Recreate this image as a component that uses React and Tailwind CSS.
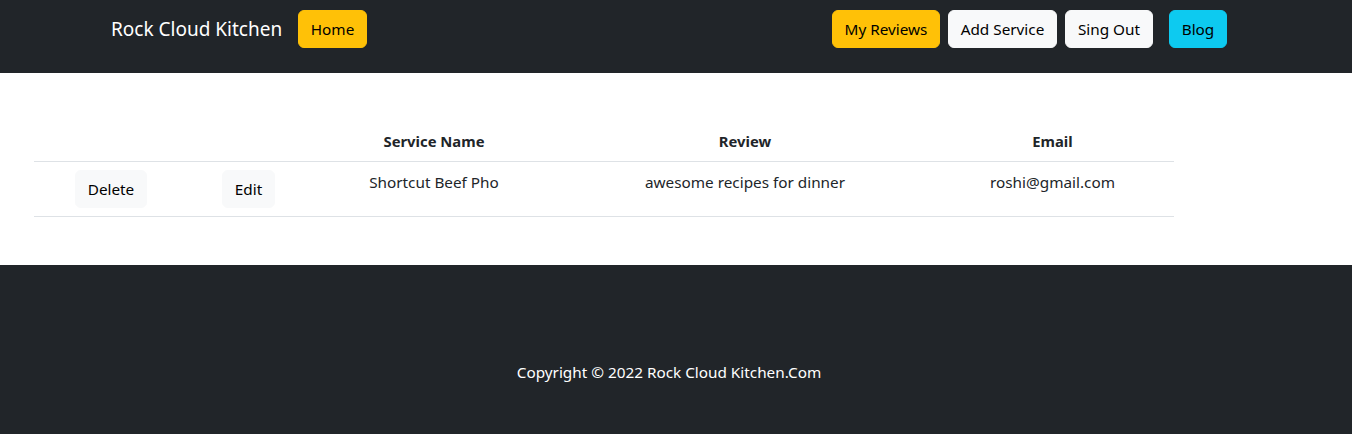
export default function App() {
  const btn = "h-[38px] rounded-[6px] border text-black flex items-center justify-center";
  return (
    <div className="font-['Segoe_UI','Noto_Sans',sans-serif] text-[15.3px] leading-[24px] text-[#212529] bg-white">
      <nav className="bg-[#212529] h-[73px] flex items-start justify-between pt-[10px] pl-[111px] pr-[125px]">
        <div className="flex items-center">
          <span className="text-white text-[19px] leading-[38px] w-[187px]">Rock Cloud Kitchen</span>
          <button className={`${btn} w-[69px] bg-[#ffc107] border-[#ffc107]`}>Home</button>
        </div>
        <div className="flex items-center">
          <button className={`${btn} w-[108px] bg-[#ffc107] border-[#ffc107] mr-[8px]`}>My Reviews</button>
          <button className={`${btn} w-[109px] bg-[#f8f9fa] border-[#f8f9fa] mr-[8px]`}>Add Service</button>
          <button className={`${btn} w-[88px] bg-[#f8f9fa] border-[#f8f9fa] mr-[16px]`}>Sing Out</button>
          <button className={`${btn} w-[58px] bg-[#0dcaf0] border-[#0dcaf0]`}>Blog</button>
        </div>
      </nav>
      <div className="pt-[48px] pb-[48px] pl-[34px]">
        <table className="w-[1140px] border-collapse text-center">
          <thead>
            <tr className="border-b border-[#dee2e6]">
              <th className="w-[154px] p-[8px]"></th>
              <th className="w-[121px] p-[8px]"></th>
              <th className="w-[250px] p-[8px] font-bold text-[14.8px]">Service Name</th>
              <th className="w-[372px] p-[8px] font-bold text-[14.8px]">Review</th>
              <th className="p-[8px] font-bold text-[14.8px]">Email</th>
            </tr>
          </thead>
          <tbody>
            <tr className="border-b border-[#dee2e6] align-top">
              <td className="p-[8px]">
                <button className={`${btn} w-[72px] mx-auto bg-[#f8f9fa] border-[#f8f9fa]`}>Delete</button>
              </td>
              <td className="p-[8px]">
                <button className={`${btn} w-[53px] mx-auto bg-[#f8f9fa] border-[#f8f9fa]`}>Edit</button>
              </td>
              <td className="p-[8px]">Shortcut Beef Pho</td>
              <td className="p-[8px]">awesome recipes for dinner</td>
              <td className="p-[8px]">roshi@gmail.com</td>
            </tr>
          </tbody>
        </table>
      </div>
      <footer className="bg-[#212529] h-[169px] pt-[95px] pr-[14px] text-center text-white">
        <p>Copyright © 2022 Rock Cloud Kitchen.Com</p>
      </footer>
    </div>
  );
}
